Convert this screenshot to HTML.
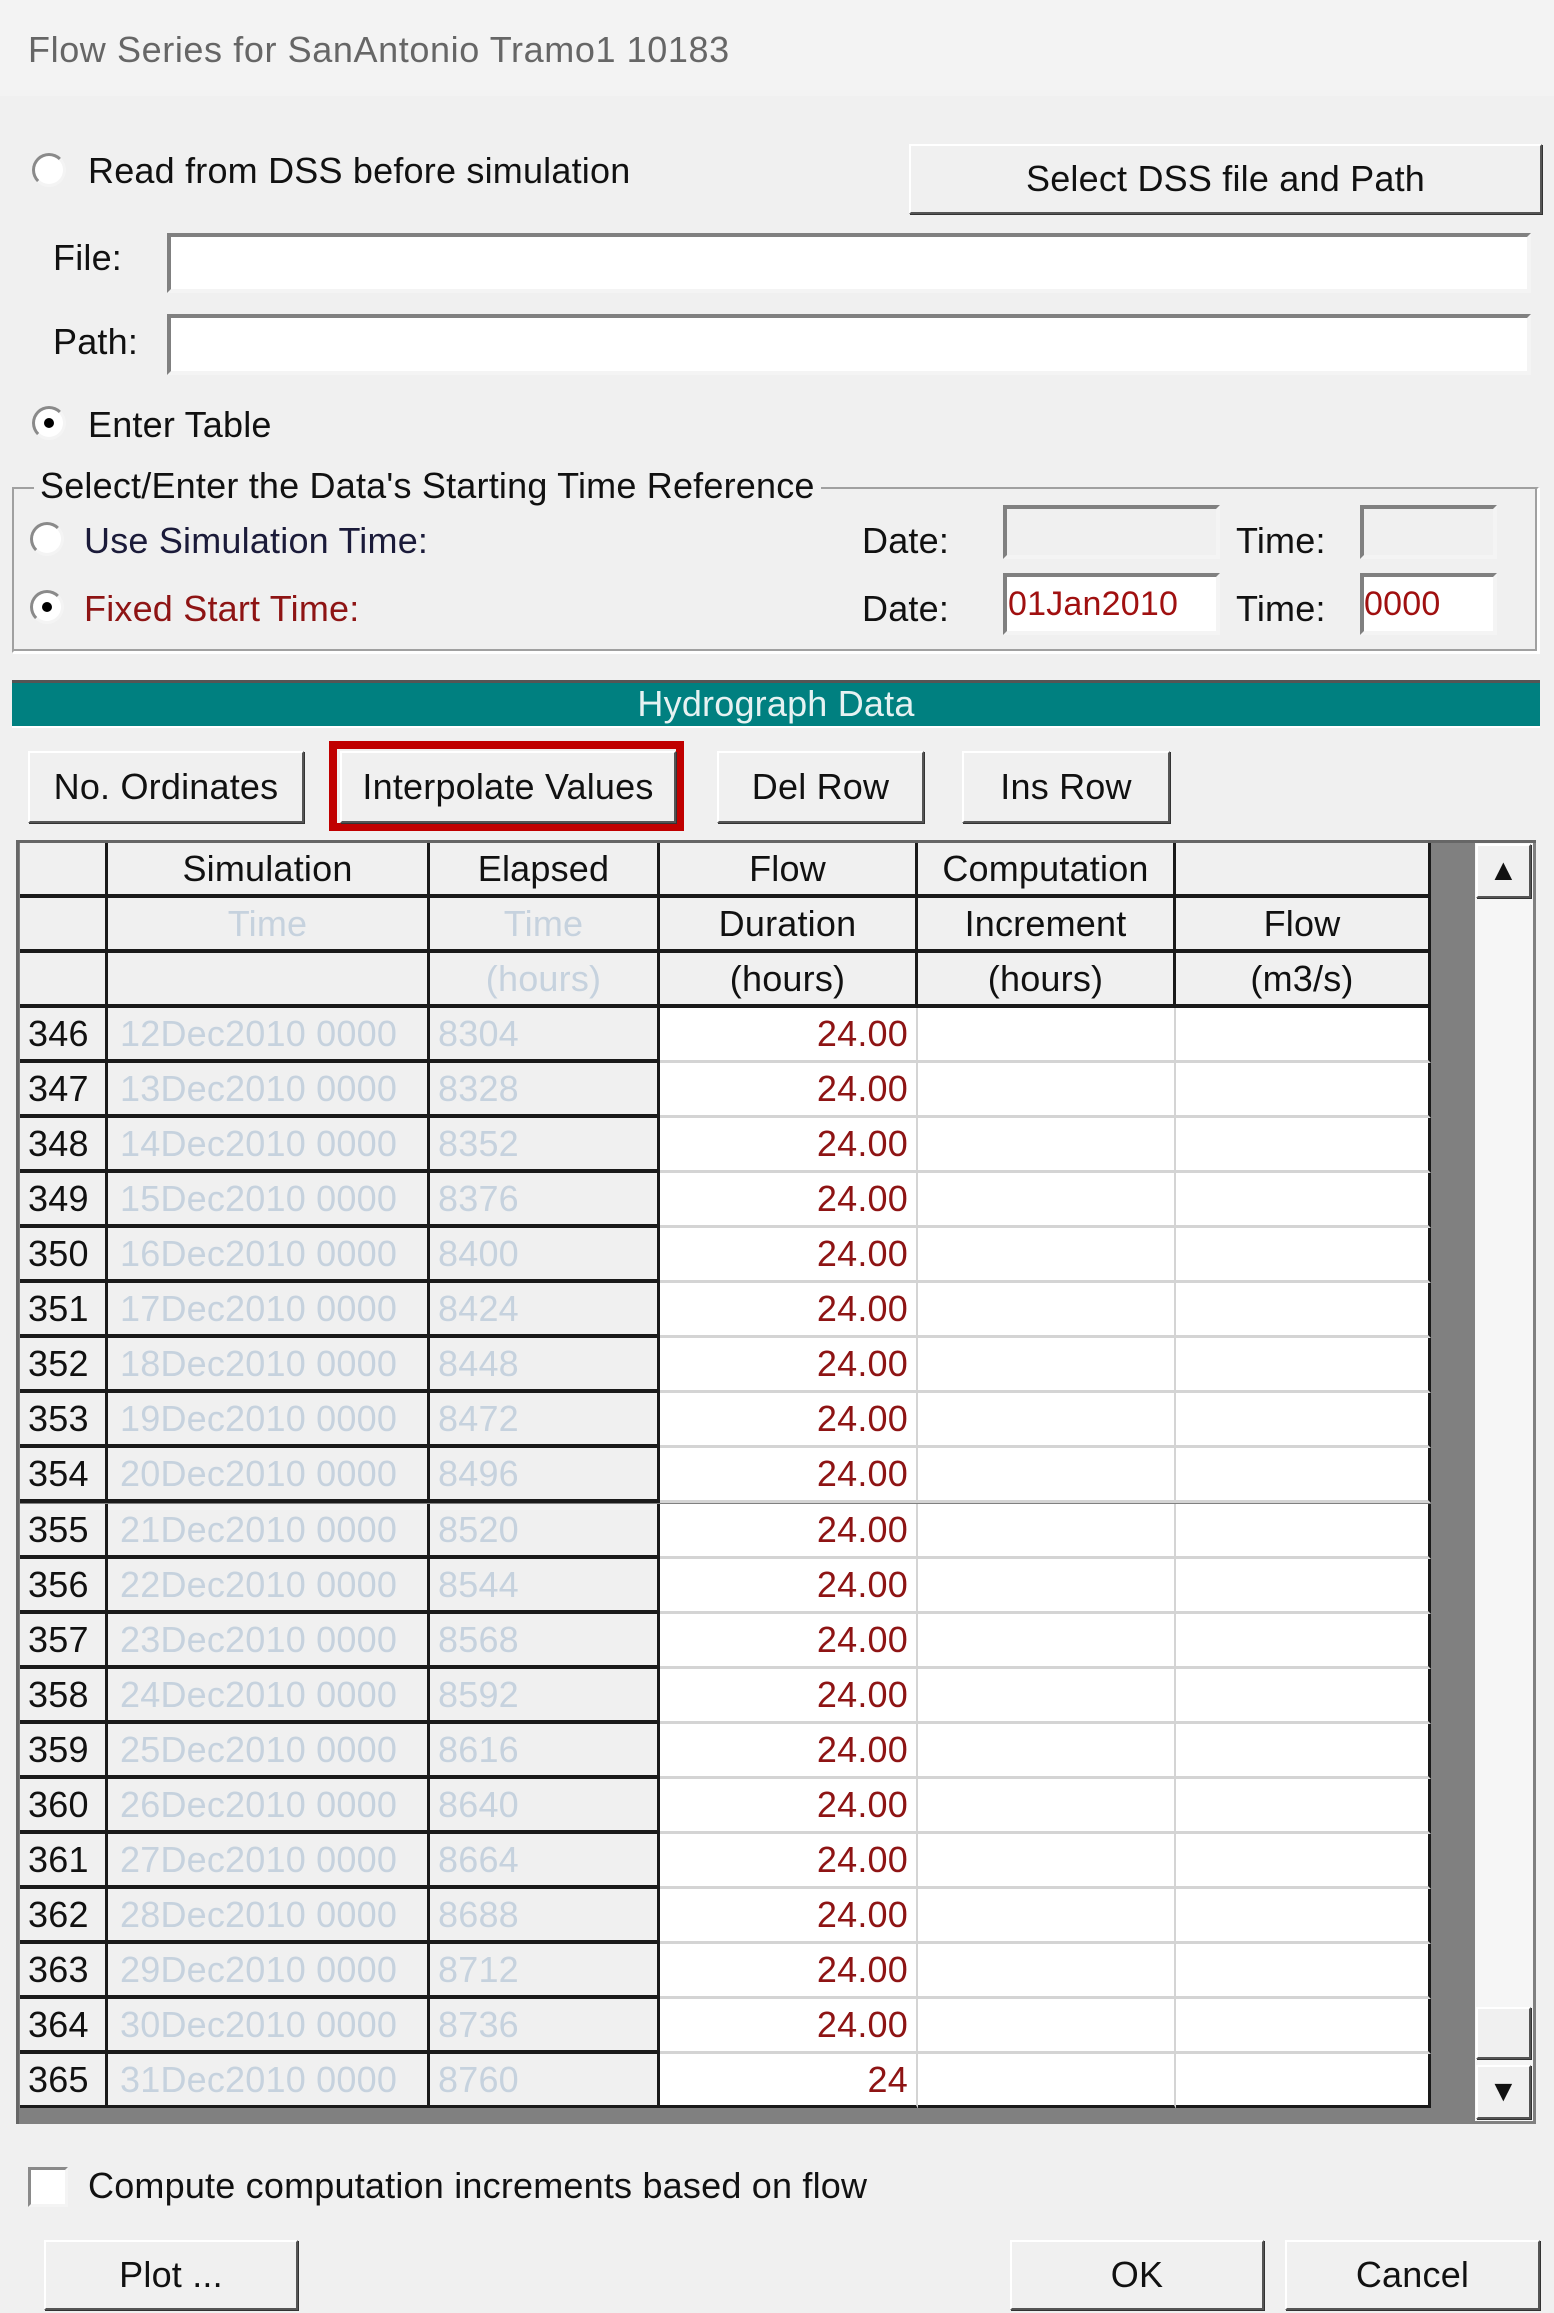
<!DOCTYPE html>
<html><head><meta charset="utf-8">
<style>
*{box-sizing:border-box;margin:0;padding:0}
body{width:1554px;height:2313px;background:#f0f0f0;position:relative;overflow:hidden;font-family:"Liberation Sans",sans-serif;font-size:36px;letter-spacing:0.2px;color:#111}
.a{position:absolute}
.t{position:absolute;line-height:40px;white-space:nowrap}
.btn{position:absolute;background:#f0f0f0;border:2px solid;border-color:#fff #555 #555 #fff;box-shadow:1px 1px 0 #333;text-align:center;display:flex;align-items:center;justify-content:center;white-space:nowrap}
.inp{position:absolute;background:#fff;border:4px solid;border-color:#808080 #f4f4f4 #f4f4f4 #808080}
.radio{position:absolute;width:34px;height:34px;border-radius:50%;background:#fff;border:3px solid;border-color:#8a8a8a #f4f4f4 #f4f4f4 #8a8a8a}
.radio.on::after{content:"";position:absolute;left:9px;top:9px;width:10px;height:10px;border-radius:50%;background:#000}
.row{position:absolute;left:20px;height:55px;width:1411px}
.c{position:absolute;top:0;height:100%;display:flex;align-items:center;white-space:nowrap;overflow:hidden}
.g{background:#f0f0f0;border-right:3px solid #1a1a1a;border-bottom:4px solid #1a1a1a}
.w{background:#fff;border-right:2px solid #d4d4d4;border-bottom:3px solid #d4d4d4}
.lt{color:#c6d2de}
.red{color:#8e1414}
.ctr{justify-content:center}
</style></head><body>
<div class="a" style="left:0;top:0;width:1554px;height:96px;background:#f3f3f3"></div>
<div class="t" style="left:28px;top:30px;color:#666;font-size:36px;letter-spacing:0.6px">Flow Series for SanAntonio Tramo1 10183</div>

<div class="radio" style="left:32px;top:153px"></div>
<div class="t" style="left:88px;top:151px">Read from DSS before simulation</div>
<div class="btn" style="left:909px;top:144px;width:633px;height:70px">Select DSS file and Path</div>

<div class="t" style="left:53px;top:238px">File:</div>
<div class="inp" style="left:167px;top:233px;width:1364px;height:60px"></div>
<div class="t" style="left:53px;top:322px">Path:</div>
<div class="inp" style="left:167px;top:314px;width:1364px;height:61px"></div>

<div class="radio on" style="left:32px;top:406px"></div>
<div class="t" style="left:88px;top:405px">Enter Table</div>

<div class="a" style="left:12px;top:487px;width:1527px;height:166px;border:2px solid;border-color:#a0a0a0 #fff #fff #a0a0a0;box-shadow:inset -2px -2px 0 #a0a0a0, 1px 1px 0 #fff"></div>
<div class="t" style="left:34px;top:466px;background:#f0f0f0;padding:0 6px">Select/Enter the Data's Starting Time Reference</div>
<div class="radio" style="left:30px;top:522px"></div>
<div class="t" style="left:84px;top:521px;color:#1b1b3a">Use Simulation Time:</div>
<div class="radio on" style="left:30px;top:590px"></div>
<div class="t" style="left:84px;top:589px;color:#8e1414">Fixed Start Time:</div>
<div class="t" style="left:862px;top:521px">Date:</div>
<div class="t" style="left:862px;top:589px">Date:</div>
<div class="t" style="left:1236px;top:521px">Time:</div>
<div class="t" style="left:1236px;top:589px">Time:</div>
<div class="inp" style="left:1003px;top:505px;width:217px;height:54px;background:#f0f0f0"></div>
<div class="inp" style="left:1360px;top:505px;width:137px;height:54px;background:#f0f0f0"></div>
<div class="inp" style="left:1003px;top:573px;width:217px;height:62px"></div>
<div class="t" style="left:1008px;top:584px;color:#a01010;font-size:34px">01Jan2010</div>
<div class="inp" style="left:1360px;top:573px;width:137px;height:62px"></div>
<div class="t" style="left:1364px;top:584px;color:#a01010;font-size:34px">0000</div>

<div class="a" style="left:12px;top:680px;width:1528px;height:48px;background:#008080;border-top:3px solid #555;border-bottom:2px solid #fff;color:#e6f2f2;text-align:center;line-height:42px">Hydrograph Data</div>

<div class="btn" style="left:28px;top:751px;width:276px;height:72px">No. Ordinates</div>
<div class="a" style="left:329px;top:741px;width:355px;height:90px;border:8px solid #c00000"></div>
<div class="btn" style="left:340px;top:751px;width:336px;height:72px">Interpolate Values</div>
<div class="btn" style="left:717px;top:751px;width:207px;height:72px">Del Row</div>
<div class="btn" style="left:962px;top:751px;width:208px;height:72px">Ins Row</div>

<!-- table frame -->
<div class="a" style="left:16px;top:840px;width:1520px;height:1284px;background:#808080;border-top:3px solid #666;border-left:3px solid #666"></div>
<div class="a" style="left:1475px;top:843px;width:58px;height:1278px;background:#f6f6f6"></div>
<div class="btn" style="left:1476px;top:844px;width:55px;height:54px;font-size:30px">▲</div>
<div class="btn" style="left:1476px;top:2007px;width:55px;height:52px"></div>
<div class="btn" style="left:1476px;top:2065px;width:55px;height:54px;font-size:30px">▼</div>

<!-- header -->
<div class="row" style="top:843px">
<div class="c g" style="left:0;width:88px"></div>
<div class="c g ctr" style="left:88px;width:322px">Simulation</div>
<div class="c g ctr" style="left:410px;width:230px">Elapsed</div>
<div class="c g ctr" style="left:640px;width:258px">Flow</div>
<div class="c g ctr" style="left:898px;width:258px">Computation</div>
<div class="c g ctr" style="left:1156px;width:255px"></div>
</div>
<div class="row" style="top:898px">
<div class="c g" style="left:0;width:88px"></div>
<div class="c g ctr lt" style="left:88px;width:322px">Time</div>
<div class="c g ctr lt" style="left:410px;width:230px">Time</div>
<div class="c g ctr" style="left:640px;width:258px">Duration</div>
<div class="c g ctr" style="left:898px;width:258px">Increment</div>
<div class="c g ctr" style="left:1156px;width:255px">Flow</div>
</div>
<div class="row" style="top:953px">
<div class="c g" style="left:0;width:88px"></div>
<div class="c g" style="left:88px;width:322px"></div>
<div class="c g ctr lt" style="left:410px;width:230px">(hours)</div>
<div class="c g ctr" style="left:640px;width:258px">(hours)</div>
<div class="c g ctr" style="left:898px;width:258px">(hours)</div>
<div class="c g ctr" style="left:1156px;width:255px">(m3/s)</div>
</div>

<div class="row" style="top:1008px"><div class="c g" style="left:0;width:88px;padding-left:8px">346</div><div class="c g lt" style="left:88px;width:322px;padding-left:12px">12Dec2010 0000</div><div class="c g lt" style="left:410px;width:230px;padding-left:8px">8304</div><div class="c w red" style="left:640px;width:258px;justify-content:flex-end;padding-right:8px">24.00</div><div class="c w" style="left:898px;width:258px"></div><div class="c w" style="left:1156px;width:255px;border-right:3px solid #1a1a1a"></div></div>
<div class="row" style="top:1063px"><div class="c g" style="left:0;width:88px;padding-left:8px">347</div><div class="c g lt" style="left:88px;width:322px;padding-left:12px">13Dec2010 0000</div><div class="c g lt" style="left:410px;width:230px;padding-left:8px">8328</div><div class="c w red" style="left:640px;width:258px;justify-content:flex-end;padding-right:8px">24.00</div><div class="c w" style="left:898px;width:258px"></div><div class="c w" style="left:1156px;width:255px;border-right:3px solid #1a1a1a"></div></div>
<div class="row" style="top:1118px"><div class="c g" style="left:0;width:88px;padding-left:8px">348</div><div class="c g lt" style="left:88px;width:322px;padding-left:12px">14Dec2010 0000</div><div class="c g lt" style="left:410px;width:230px;padding-left:8px">8352</div><div class="c w red" style="left:640px;width:258px;justify-content:flex-end;padding-right:8px">24.00</div><div class="c w" style="left:898px;width:258px"></div><div class="c w" style="left:1156px;width:255px;border-right:3px solid #1a1a1a"></div></div>
<div class="row" style="top:1173px"><div class="c g" style="left:0;width:88px;padding-left:8px">349</div><div class="c g lt" style="left:88px;width:322px;padding-left:12px">15Dec2010 0000</div><div class="c g lt" style="left:410px;width:230px;padding-left:8px">8376</div><div class="c w red" style="left:640px;width:258px;justify-content:flex-end;padding-right:8px">24.00</div><div class="c w" style="left:898px;width:258px"></div><div class="c w" style="left:1156px;width:255px;border-right:3px solid #1a1a1a"></div></div>
<div class="row" style="top:1228px"><div class="c g" style="left:0;width:88px;padding-left:8px">350</div><div class="c g lt" style="left:88px;width:322px;padding-left:12px">16Dec2010 0000</div><div class="c g lt" style="left:410px;width:230px;padding-left:8px">8400</div><div class="c w red" style="left:640px;width:258px;justify-content:flex-end;padding-right:8px">24.00</div><div class="c w" style="left:898px;width:258px"></div><div class="c w" style="left:1156px;width:255px;border-right:3px solid #1a1a1a"></div></div>
<div class="row" style="top:1283px"><div class="c g" style="left:0;width:88px;padding-left:8px">351</div><div class="c g lt" style="left:88px;width:322px;padding-left:12px">17Dec2010 0000</div><div class="c g lt" style="left:410px;width:230px;padding-left:8px">8424</div><div class="c w red" style="left:640px;width:258px;justify-content:flex-end;padding-right:8px">24.00</div><div class="c w" style="left:898px;width:258px"></div><div class="c w" style="left:1156px;width:255px;border-right:3px solid #1a1a1a"></div></div>
<div class="row" style="top:1338px"><div class="c g" style="left:0;width:88px;padding-left:8px">352</div><div class="c g lt" style="left:88px;width:322px;padding-left:12px">18Dec2010 0000</div><div class="c g lt" style="left:410px;width:230px;padding-left:8px">8448</div><div class="c w red" style="left:640px;width:258px;justify-content:flex-end;padding-right:8px">24.00</div><div class="c w" style="left:898px;width:258px"></div><div class="c w" style="left:1156px;width:255px;border-right:3px solid #1a1a1a"></div></div>
<div class="row" style="top:1393px"><div class="c g" style="left:0;width:88px;padding-left:8px">353</div><div class="c g lt" style="left:88px;width:322px;padding-left:12px">19Dec2010 0000</div><div class="c g lt" style="left:410px;width:230px;padding-left:8px">8472</div><div class="c w red" style="left:640px;width:258px;justify-content:flex-end;padding-right:8px">24.00</div><div class="c w" style="left:898px;width:258px"></div><div class="c w" style="left:1156px;width:255px;border-right:3px solid #1a1a1a"></div></div>
<div class="row" style="top:1448px"><div class="c g" style="left:0;width:88px;padding-left:8px">354</div><div class="c g lt" style="left:88px;width:322px;padding-left:12px">20Dec2010 0000</div><div class="c g lt" style="left:410px;width:230px;padding-left:8px">8496</div><div class="c w red" style="left:640px;width:258px;justify-content:flex-end;padding-right:8px">24.00</div><div class="c w" style="left:898px;width:258px"></div><div class="c w" style="left:1156px;width:255px;border-right:3px solid #1a1a1a"></div></div>
<div class="row" style="top:1504px"><div class="c g" style="left:0;width:88px;padding-left:8px">355</div><div class="c g lt" style="left:88px;width:322px;padding-left:12px">21Dec2010 0000</div><div class="c g lt" style="left:410px;width:230px;padding-left:8px">8520</div><div class="c w red" style="left:640px;width:258px;justify-content:flex-end;padding-right:8px">24.00</div><div class="c w" style="left:898px;width:258px"></div><div class="c w" style="left:1156px;width:255px;border-right:3px solid #1a1a1a"></div></div>
<div class="row" style="top:1559px"><div class="c g" style="left:0;width:88px;padding-left:8px">356</div><div class="c g lt" style="left:88px;width:322px;padding-left:12px">22Dec2010 0000</div><div class="c g lt" style="left:410px;width:230px;padding-left:8px">8544</div><div class="c w red" style="left:640px;width:258px;justify-content:flex-end;padding-right:8px">24.00</div><div class="c w" style="left:898px;width:258px"></div><div class="c w" style="left:1156px;width:255px;border-right:3px solid #1a1a1a"></div></div>
<div class="row" style="top:1614px"><div class="c g" style="left:0;width:88px;padding-left:8px">357</div><div class="c g lt" style="left:88px;width:322px;padding-left:12px">23Dec2010 0000</div><div class="c g lt" style="left:410px;width:230px;padding-left:8px">8568</div><div class="c w red" style="left:640px;width:258px;justify-content:flex-end;padding-right:8px">24.00</div><div class="c w" style="left:898px;width:258px"></div><div class="c w" style="left:1156px;width:255px;border-right:3px solid #1a1a1a"></div></div>
<div class="row" style="top:1669px"><div class="c g" style="left:0;width:88px;padding-left:8px">358</div><div class="c g lt" style="left:88px;width:322px;padding-left:12px">24Dec2010 0000</div><div class="c g lt" style="left:410px;width:230px;padding-left:8px">8592</div><div class="c w red" style="left:640px;width:258px;justify-content:flex-end;padding-right:8px">24.00</div><div class="c w" style="left:898px;width:258px"></div><div class="c w" style="left:1156px;width:255px;border-right:3px solid #1a1a1a"></div></div>
<div class="row" style="top:1724px"><div class="c g" style="left:0;width:88px;padding-left:8px">359</div><div class="c g lt" style="left:88px;width:322px;padding-left:12px">25Dec2010 0000</div><div class="c g lt" style="left:410px;width:230px;padding-left:8px">8616</div><div class="c w red" style="left:640px;width:258px;justify-content:flex-end;padding-right:8px">24.00</div><div class="c w" style="left:898px;width:258px"></div><div class="c w" style="left:1156px;width:255px;border-right:3px solid #1a1a1a"></div></div>
<div class="row" style="top:1779px"><div class="c g" style="left:0;width:88px;padding-left:8px">360</div><div class="c g lt" style="left:88px;width:322px;padding-left:12px">26Dec2010 0000</div><div class="c g lt" style="left:410px;width:230px;padding-left:8px">8640</div><div class="c w red" style="left:640px;width:258px;justify-content:flex-end;padding-right:8px">24.00</div><div class="c w" style="left:898px;width:258px"></div><div class="c w" style="left:1156px;width:255px;border-right:3px solid #1a1a1a"></div></div>
<div class="row" style="top:1834px"><div class="c g" style="left:0;width:88px;padding-left:8px">361</div><div class="c g lt" style="left:88px;width:322px;padding-left:12px">27Dec2010 0000</div><div class="c g lt" style="left:410px;width:230px;padding-left:8px">8664</div><div class="c w red" style="left:640px;width:258px;justify-content:flex-end;padding-right:8px">24.00</div><div class="c w" style="left:898px;width:258px"></div><div class="c w" style="left:1156px;width:255px;border-right:3px solid #1a1a1a"></div></div>
<div class="row" style="top:1889px"><div class="c g" style="left:0;width:88px;padding-left:8px">362</div><div class="c g lt" style="left:88px;width:322px;padding-left:12px">28Dec2010 0000</div><div class="c g lt" style="left:410px;width:230px;padding-left:8px">8688</div><div class="c w red" style="left:640px;width:258px;justify-content:flex-end;padding-right:8px">24.00</div><div class="c w" style="left:898px;width:258px"></div><div class="c w" style="left:1156px;width:255px;border-right:3px solid #1a1a1a"></div></div>
<div class="row" style="top:1944px"><div class="c g" style="left:0;width:88px;padding-left:8px">363</div><div class="c g lt" style="left:88px;width:322px;padding-left:12px">29Dec2010 0000</div><div class="c g lt" style="left:410px;width:230px;padding-left:8px">8712</div><div class="c w red" style="left:640px;width:258px;justify-content:flex-end;padding-right:8px">24.00</div><div class="c w" style="left:898px;width:258px"></div><div class="c w" style="left:1156px;width:255px;border-right:3px solid #1a1a1a"></div></div>
<div class="row" style="top:1999px"><div class="c g" style="left:0;width:88px;padding-left:8px">364</div><div class="c g lt" style="left:88px;width:322px;padding-left:12px">30Dec2010 0000</div><div class="c g lt" style="left:410px;width:230px;padding-left:8px">8736</div><div class="c w red" style="left:640px;width:258px;justify-content:flex-end;padding-right:8px">24.00</div><div class="c w" style="left:898px;width:258px"></div><div class="c w" style="left:1156px;width:255px;border-right:3px solid #1a1a1a"></div></div>
<div class="row" style="top:2054px"><div class="c g" style="left:0;width:88px;padding-left:8px">365</div><div class="c g lt" style="left:88px;width:322px;padding-left:12px">31Dec2010 0000</div><div class="c g lt" style="left:410px;width:230px;padding-left:8px">8760</div><div class="c w red" style="left:640px;width:258px;justify-content:flex-end;padding-right:8px;border-bottom:4px solid #1a1a1a">24</div><div class="c w" style="left:898px;width:258px;border-bottom:4px solid #1a1a1a"></div><div class="c w" style="left:1156px;width:255px;border-right:3px solid #1a1a1a;border-bottom:4px solid #1a1a1a"></div></div>
<div class="a" style="left:20px;top:2108px;width:1455px;height:13px;background:#808080"></div>

<div class="a" style="left:28px;top:2167px;width:40px;height:40px;background:#fff;border:3px solid;border-color:#8a8a8a #f4f4f4 #f4f4f4 #8a8a8a"></div>
<div class="t" style="left:88px;top:2166px">Compute computation increments based on flow</div>

<div class="btn" style="left:44px;top:2240px;width:254px;height:70px">Plot ...</div>
<div class="btn" style="left:1010px;top:2240px;width:254px;height:70px">OK</div>
<div class="btn" style="left:1285px;top:2240px;width:255px;height:70px">Cancel</div>
</body></html>
